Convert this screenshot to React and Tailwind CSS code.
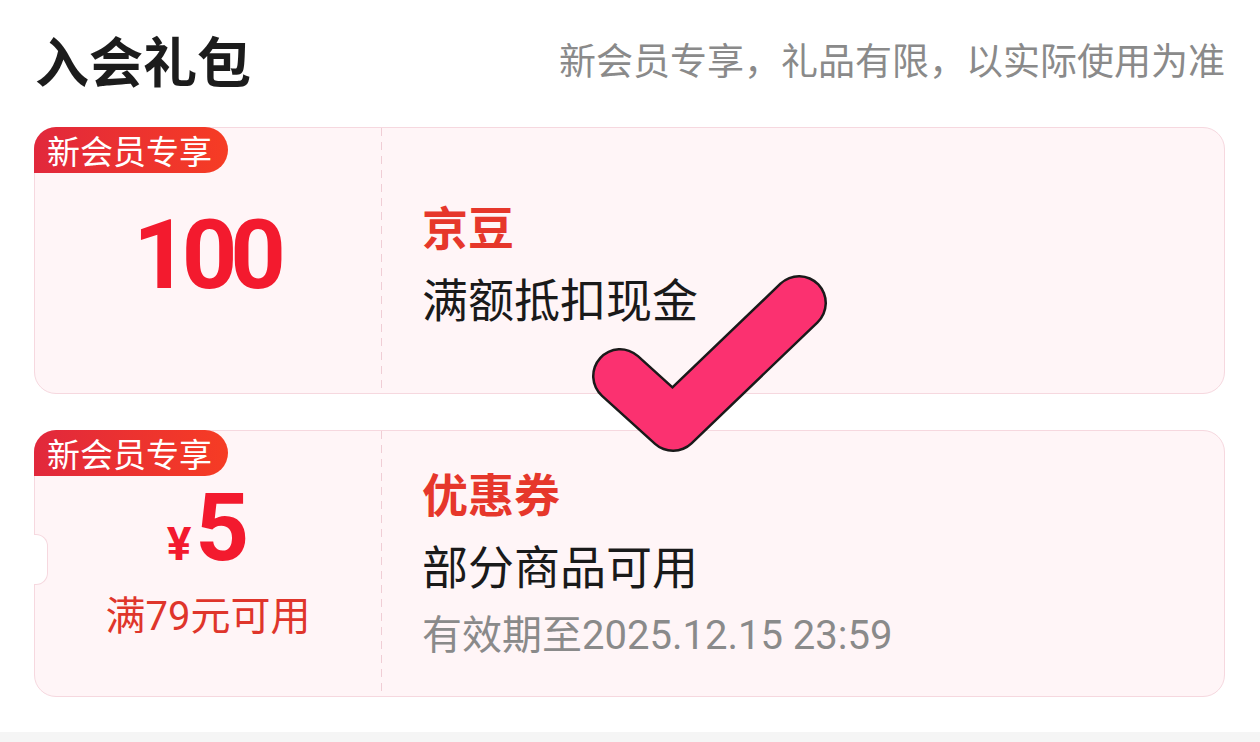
import React from 'react';

const cjk = { fontFamily: '"Noto Sans CJK SC", "Noto Sans", sans-serif' };
const num = { fontFamily: 'Roboto, "Noto Sans CJK SC", sans-serif' };

// 红色渐变角标
const Badge = () => (
  <div
    className="absolute left-[-1px] top-[-1px] h-[46px] w-[194px] flex items-center pl-[13px] text-white text-[33px] leading-none rounded-tl-[22px] rounded-tr-[23px] rounded-br-[23px] bg-[linear-gradient(90deg,#e1283c,#f63c24)]"
    style={cjk}
  >
    新会员专享
  </div>
);

const Card = ({ left, children, notch }) => (
  <div className="relative flex w-[1191px] h-[267px] rounded-[22px] border border-[#f6d8df] bg-[#fff5f7]">
    <Badge />
    {notch && (
      <div className="absolute left-[-1px] top-[103px] w-[14px] h-[51px] bg-white border border-l-0 border-[#f6d8df] rounded-r-[12px]" />
    )}
    <div className="w-[346px] shrink-0 flex flex-col items-center justify-center">{left}</div>
    <div className="w-px self-stretch bg-[repeating-linear-gradient(to_bottom,#f0cdd5_0,#f0cdd5_8px,transparent_8px,transparent_14px)]" />
    <div className="flex-1 flex flex-col justify-center pl-[40px]" style={cjk}>
      {children}
    </div>
  </div>
);

export default function App() {
  return (
    <div className="relative w-[1260px] h-[742px] bg-white overflow-hidden">
      {/* 标题 */}
      <div className="h-[127px] pb-[8px] flex items-center justify-between pl-[35px] pr-[35px]" style={cjk}>
        <div className="text-[54px] font-bold text-[#1c1c1c] leading-none">入会礼包</div>
        <div className="text-[37px] text-[#8a8a8a] leading-none">新会员专享，礼品有限，以实际使用为准</div>
      </div>

      <div className="flex flex-col gap-[36px] pl-[34px]">
        <Card
          left={
            <div className="text-[97px] font-bold text-[#f31a2e] leading-none tracking-[-7px] mb-[10px] pr-[4px]" style={num}>
              100
            </div>
          }
        >
          <div className="text-[46px] font-bold text-[#e6372b] leading-[72px]">京豆</div>
          <div className="text-[46px] text-[#1a1a1a] leading-[72px]">满额抵扣现金</div>
        </Card>

        <Card
          notch
          left={
            <>
              <div className="flex items-baseline text-[#f31a2e] font-bold leading-[80px]" style={num}>
                <span className="text-[46px] mr-[4px]">¥</span>
                <span className="text-[94px]">5</span>
              </div>
              <div className="text-[40px] text-[#df352b] leading-[44px] mt-[11px]" style={num}>
                满79元可用
              </div>
            </>
          }
        >
          <div className="text-[46px] font-bold text-[#e6372b] leading-[72px]">优惠券</div>
          <div className="text-[46px] text-[#1a1a1a] leading-[72px]">部分商品可用</div>
          <div className="text-[40px] text-[#8a8a8a] leading-[72px]" style={num}>
            有效期至2025.12.15 23:59
          </div>
        </Card>
      </div>

      <div className="absolute left-0 right-0 bottom-0 h-[10px] bg-[#f5f5f5]" />

      {/* 对勾 */}
      <svg className="absolute left-0 top-0 pointer-events-none" width="1260" height="742" viewBox="0 0 1260 742">
        <polyline points="620,376 673,424 799,303" fill="none" stroke="#1a1a1a" strokeWidth="56" strokeLinecap="round" strokeLinejoin="round" />
        <polyline points="620,376 673,424 799,303" fill="none" stroke="#fb3170" strokeWidth="51" strokeLinecap="round" strokeLinejoin="round" />
      </svg>
    </div>
  );
}
